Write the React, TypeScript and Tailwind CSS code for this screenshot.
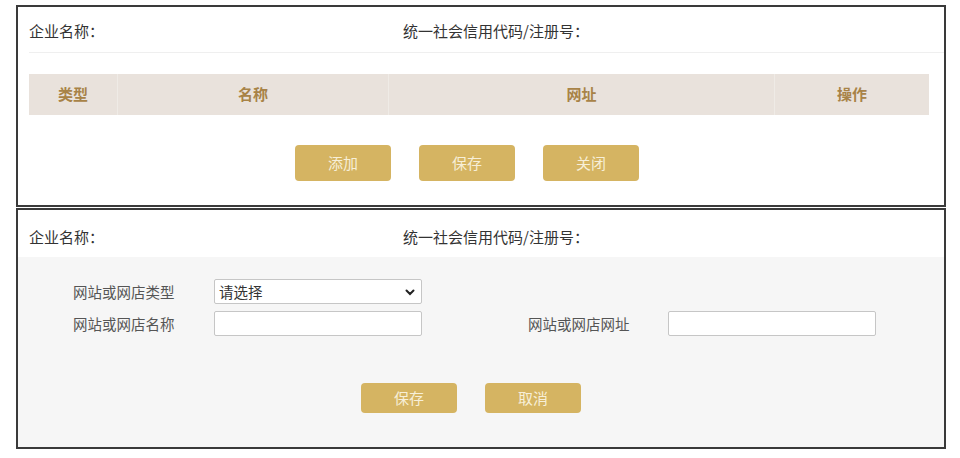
import React from 'react';

const font = { fontFamily: '"Noto Sans CJK SC", "Noto Sans", sans-serif' };

const columns = [
  { title: '类型', w: 'w-[89px]' },
  { title: '名称', w: 'w-[271px]' },
  { title: '网址', w: 'w-[386px]' },
  { title: '操作', w: 'w-[154px]' },
];

const GoldButton = ({ label, h }: { label: string; h: string }) => (
  <button
    type="button"
    className={`w-[96px] ${h} rounded-[4px] bg-[#d5b462] text-[15px] text-[#f7efd8]`}
  >
    {label}
  </button>
);

const InfoHeader = ({ className }: { className: string }) => (
  <div className={`flex text-[15px] text-[#333] ${className}`}>
    <div className="w-[374px]">企业名称：</div>
    <div>统一社会信用代码/注册号：</div>
  </div>
);

const Chevron = () => (
  <svg width="10" height="7" viewBox="0 0 10 7" className="absolute right-[7px] top-[10px]">
    <path d="M1.5 1.5 L5 5 L8.5 1.5" fill="none" stroke="#222" strokeWidth="2" strokeLinecap="round" />
  </svg>
);

export default function App() {
  return (
    <div className="min-h-[458px] bg-white pt-[5px]" style={font}>
      {/* list view */}
      <div className="ml-[16px] w-[930px] h-[202px] border-2 border-[#3a3a3a] bg-white">
        <InfoHeader className="ml-[11px] h-[46px] pt-[13px] border-b border-[#efefef]" />

        <div className="ml-[11px] mt-[21px] flex h-[41px] w-[900px] bg-[#e9e2dc]">
          {columns.map((c, i) => (
            <div
              key={c.title}
              className={`${c.w} flex items-center justify-center text-[15px] font-bold text-[#a88347] ${
                i < columns.length - 1 ? 'border-r border-[#efebe6]' : ''
              }`}
            >
              {c.title}
            </div>
          ))}
        </div>

        <div className="mt-[30px] flex justify-center gap-[28px] pr-[28px]">
          <GoldButton label="添加" h="h-[36px]" />
          <GoldButton label="保存" h="h-[36px]" />
          <GoldButton label="关闭" h="h-[36px]" />
        </div>
      </div>

      {/* edit view */}
      <div className="ml-[16px] mt-px w-[930px] h-[241px] border-2 border-[#3a3a3a] bg-[#f6f6f6]">
        <InfoHeader className="bg-white pl-[11px] h-[47px] pt-[16px]" />

        <div className="pl-[55px] pt-[22px] text-[14.5px] text-[#555]">
          <div className="flex items-center">
            <div className="w-[141px]">网站或网店类型</div>
            <div className="relative w-[208px]">
              <select className="block h-[25px] w-full appearance-none rounded-[2px] border border-[#c6c6c6] bg-white pl-[4px] text-[14.5px] text-[#333] outline-none">
                <option>请选择</option>
              </select>
              <Chevron />
            </div>
          </div>
          <div className="mt-[7px] flex items-center">
            <div className="w-[141px]">网站或网店名称</div>
            <input className="h-[25px] w-[208px] rounded-[2px] border border-[#c6c6c6] bg-white outline-none" />
            <div className="ml-[106px] w-[140px]">网站或网店网址</div>
            <input className="h-[25px] w-[208px] rounded-[2px] border border-[#c6c6c6] bg-white outline-none" />
          </div>
        </div>

        <div className="mt-[47px] flex justify-center gap-[28px] pr-[20px]">
          <GoldButton label="保存" h="h-[30px]" />
          <GoldButton label="取消" h="h-[30px]" />
        </div>
      </div>
    </div>
  );
}
